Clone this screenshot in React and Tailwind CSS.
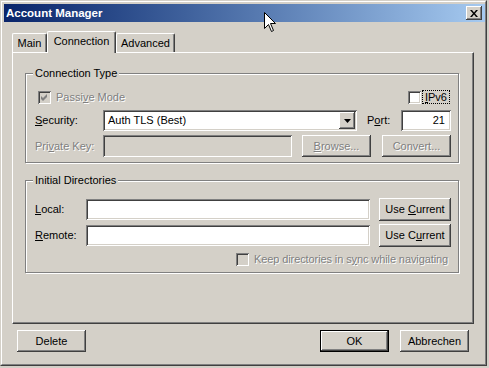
import React from 'react';

const raised = 'shadow-[inset_-1px_-1px_#404040,inset_1px_1px_#fff,inset_-2px_-2px_#808080]';
const raisedDefault = 'shadow-[inset_0_0_0_1px_#000,inset_-2px_-2px_#404040,inset_2px_2px_#fff,inset_-3px_-3px_#808080]';
const sunken = 'shadow-[inset_1px_1px_#808080,inset_-1px_-1px_#fff,inset_2px_2px_#404040,inset_-2px_-2px_#d4d0c8]';
const grayText = 'text-[#808080] [text-shadow:1px_1px_0_#fff]';

const Button = ({ children, disabled, isDefault, className = '' }) => (
  <div
    className={`flex h-[22px] w-[69px] shrink-0 items-center justify-center bg-[#d4d0c8] ${
      isDefault ? raisedDefault : raised
    } ${disabled ? grayText : ''} ${className}`}
  >
    <span>{children}</span>
  </div>
);

const Check = ({ checked, disabled }) => (
  <span className={`relative block h-[13px] w-[13px] shrink-0 ${disabled ? 'bg-[#d4d0c8]' : 'bg-white'} ${sunken}`}>
    {checked && (
      <svg className="absolute left-0 top-0" width="13" height="13" viewBox="0 0 13 13">
        <path d="M3 5L5 7L9 3V6L5 10L3 8Z" fill={disabled ? '#808080' : '#000'} />
      </svg>
    )}
  </span>
);

const Group = ({ title, className = '', children }) => (
  <div className={`relative w-[434px] border border-[#808080] shadow-[1px_1px_#fff,inset_1px_1px_#fff] ${className}`}>
    <span className="absolute left-[7px] top-[-8px] bg-[#d4d0c8] px-[2px] leading-[14px]">{title}</span>
    {children}
  </div>
);

const Tab = ({ label, active, className = '' }) => (
  <div
    className={`flex shrink-0 items-center justify-center rounded-t-[2px] border-l border-t border-r border-l-white border-t-white border-r-[#404040] bg-[#d4d0c8] shadow-[inset_-1px_0_#808080] ${
      active ? 'relative z-10 -mb-px h-[22px] pb-[2px]' : 'h-[19px]'
    } ${className}`}
  >
    {label}
  </div>
);

export default function App() {
  return (
    <div className="relative h-[368px] w-[489px] bg-[#d4d0c8] font-['Liberation_Sans',Arial,sans-serif] text-[11px] leading-[13px] text-black">
      <div className="h-[366px] w-[487px] border border-b-[#404040] border-l-[#d4d0c8] border-r-[#404040] border-t-[#d4d0c8]">
        <div className="h-full w-full border border-b-[#808080] border-l-white border-r-[#808080] border-t-white pl-[2px] pt-[2px]">
          {/* title bar */}
          <div className="flex h-[18px] items-center justify-between bg-linear-to-r from-[#0a246a] to-[#a6caf0] pl-[2px] pr-[3px]">
            <span className="text-[11.5px] font-bold text-white">Account Manager</span>
            <div className={`flex h-[14px] w-[16px] items-center justify-center bg-[#d4d0c8] ${raised}`}>
              <svg width="8" height="7" viewBox="0 0 8 7">
                <path d="M0 0H2L4 2.4L6 0H8L5 3.5L8 7H6L4 4.6L2 7H0L3 3.5Z" fill="#000" />
              </svg>
            </div>
          </div>

          <div className="pl-[8px] pt-[9px]">
            {/* tabs */}
            <div className="flex items-end">
              <Tab label="Main" className="w-[35px]" />
              <Tab label="Connection" active className="w-[69px]" />
              <Tab label="Advanced" className="w-[59px]" />
            </div>

            {/* tab page */}
            <div className="flex h-[272px] w-[462px] flex-col border border-b-[#404040] border-l-white border-r-[#404040] border-t-white shadow-[inset_-1px_-1px_#808080]">
              <Group title="Connection Type" className="ml-[12px] mt-[20px] h-[90px]">
                <div className="mt-[16px] flex h-[14px] items-center justify-between pl-[12px] pr-[8px]">
                  <div className="flex items-center gap-[5px]">
                    <Check checked disabled />
                    <span className={grayText}>
                      Passi<u>v</u>e Mode
                    </span>
                  </div>
                  <div className="flex items-center gap-[1px]">
                    <Check />
                    <span className="border border-dotted border-black px-[2px] leading-[12px]">
                      <u>I</u>Pv6
                    </span>
                  </div>
                </div>

                <div className="mt-[6px] flex h-[21px] items-center pl-[9px]">
                  <span className="w-[68px]">
                    <u>S</u>ecurity:
                  </span>
                  <div className={`flex h-[21px] w-[254px] items-center justify-between bg-white pl-[5px] pr-[2px] ${sunken}`}>
                    <span>Auth TLS (Best)</span>
                    <div className={`flex h-[17px] w-[16px] items-center justify-center bg-[#d4d0c8] ${raised}`}>
                      <svg width="7" height="4" viewBox="0 0 7 4">
                        <path d="M0 0H7L3.5 4Z" fill="#000" />
                      </svg>
                    </div>
                  </div>
                  <span className="ml-[10px] w-[34px]">
                    P<u>o</u>rt:
                  </span>
                  <div className={`flex h-[21px] w-[50px] items-center justify-end bg-white pr-[6px] ${sunken}`}>21</div>
                </div>

                <div className="mt-[4px] flex h-[22px] items-center pl-[9px]">
                  <span className={`w-[68px] ${grayText}`}>
                    Pri<u>v</u>ate Key:
                  </span>
                  <div className={`h-[22px] w-[189px] bg-[#d4d0c8] ${sunken}`} />
                  <Button disabled className="ml-[10px]">
                    <u>B</u>rowse...
                  </Button>
                  <Button disabled className="ml-[11px]">
                    Convert...
                  </Button>
                </div>
              </Group>

              <Group title="Initial Directories" className="ml-[12px] mt-[17px] h-[93px]">
                <div className="mt-[17px] flex h-[23px] items-center pl-[9px]">
                  <span className="w-[51px]">
                    <u>L</u>ocal:
                  </span>
                  <div className={`h-[21px] w-[284px] bg-white ${sunken}`} />
                  <Button className="ml-[9px] h-[23px] w-[72px]">
                    Use <u>C</u>urrent
                  </Button>
                </div>
                <div className="mt-[3px] flex h-[23px] items-center pl-[9px]">
                  <span className="w-[51px]">
                    <u>R</u>emote:
                  </span>
                  <div className={`h-[21px] w-[284px] bg-white ${sunken}`} />
                  <Button className="ml-[9px] h-[23px] w-[72px]">
                    Use C<u>u</u>rrent
                  </Button>
                </div>
                <div className="mt-[6px] flex h-[13px] items-center gap-[5px] pl-[210px]">
                  <Check disabled />
                  <span className={`tracking-[-0.1px] ${grayText}`}>
                    Keep directories in s<u>y</u>nc while navigating
                  </span>
                </div>
              </Group>
            </div>

            {/* dialog buttons */}
            <div className="ml-[5px] mt-[6px] flex w-[452px] justify-between">
              <Button>Delete</Button>
              <div className="flex gap-[11px]">
                <Button isDefault>OK</Button>
                <Button>Abbrechen</Button>
              </div>
            </div>
          </div>
        </div>
      </div>

      {/* mouse pointer */}
      <svg className="absolute left-[264px] top-[12px]" width="13" height="21" viewBox="0 0 13 21">
        <path d="M0.5 0.5V16.5L4.5 12.5L7.5 19.5L9.5 18.5L6.5 11.5H11.5Z" fill="#fff" stroke="#000" />
      </svg>
    </div>
  );
}
